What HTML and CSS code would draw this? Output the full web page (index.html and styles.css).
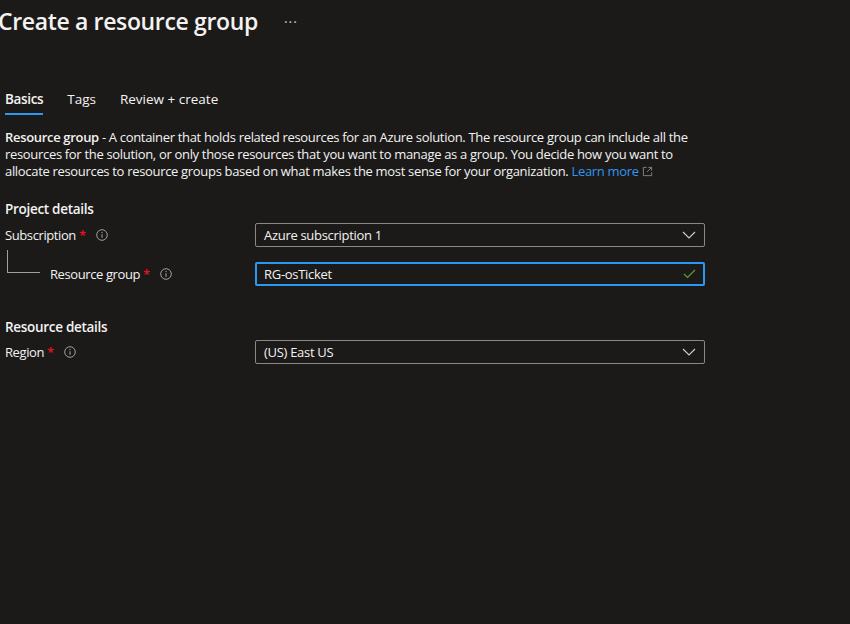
FILE: index.html
```html
<!DOCTYPE html>
<html lang="en">
<head>
<meta charset="utf-8">
<title>Create a resource group</title>
<link rel="stylesheet" href="styles.css">
</head>
<body>
<div class="page">
  <header class="header">
    <h1 class="title">Create a resource group</h1>
    <span class="more">···</span>
  </header>

  <nav class="tabs">
    <span class="tab active">Basics</span>
    <span class="tab">Tags</span>
    <span class="tab">Review + create</span>
  </nav>

  <p class="desc"><b>Resource group</b> - A container that holds related resources for an Azure solution. The resource group can include all the resources for the solution, or only those resources that you want to manage as a group. You decide how you want to allocate resources to resource groups based on what makes the most sense for your organization. <a class="link" href="#">Learn more <svg class="ext" viewBox="0 0 12 12" width="11" height="11"><path d="M5 1.5H1.5v9h9V7" fill="none" stroke="currentColor" stroke-width="1"/><path d="M7 1.5h3.5V5M10.5 1.5L5.5 6.5" fill="none" stroke="currentColor" stroke-width="1"/></svg></a></p>

  <h2 class="section">Project details</h2>
  <div class="form">
    <div class="row">
      <div class="label">Subscription <span class="req">*</span>
        <svg class="info" viewBox="0 0 12 12" width="12" height="12"><circle cx="6" cy="6" r="5.3" fill="none" stroke="currentColor" stroke-width="1"/><path d="M6 5.2v3.6" stroke="currentColor" stroke-width="1.1"/><circle cx="6" cy="3.6" r="0.7" fill="currentColor"/></svg>
      </div>
      <div class="field">
        <span>Azure subscription 1</span>
        <svg class="chev" viewBox="0 0 14 8" width="14" height="8"><path d="M1 1l6 6 6-6" fill="none" stroke="currentColor" stroke-width="1.1"/></svg>
      </div>
    </div>
    <div class="row sub">
      <div class="label"><span class="tree"></span>Resource group <span class="req">*</span>
        <svg class="info" viewBox="0 0 12 12" width="12" height="12"><circle cx="6" cy="6" r="5.3" fill="none" stroke="currentColor" stroke-width="1"/><path d="M6 5.2v3.6" stroke="currentColor" stroke-width="1.1"/><circle cx="6" cy="3.6" r="0.7" fill="currentColor"/></svg>
      </div>
      <div class="field focused">
        <span>RG-osTicket</span>
        <svg class="check" viewBox="0 0 13 10" width="13" height="10"><path d="M1 5l3.5 3.5L12 1" fill="none" stroke="currentColor" stroke-width="1.2"/></svg>
      </div>
    </div>
  </div>

  <h2 class="section second">Resource details</h2>
  <div class="form">
    <div class="row">
      <div class="label">Region <span class="req">*</span>
        <svg class="info" viewBox="0 0 12 12" width="12" height="12"><circle cx="6" cy="6" r="5.3" fill="none" stroke="currentColor" stroke-width="1"/><path d="M6 5.2v3.6" stroke="currentColor" stroke-width="1.1"/><circle cx="6" cy="3.6" r="0.7" fill="currentColor"/></svg>
      </div>
      <div class="field">
        <span>(US) East US</span>
        <svg class="chev" viewBox="0 0 14 8" width="14" height="8"><path d="M1 1l6 6 6-6" fill="none" stroke="currentColor" stroke-width="1.1"/></svg>
      </div>
    </div>
  </div>
</div>
</body>
</html>
```

FILE: styles.css
```css
html, body {
  margin: 0;
  padding: 0;
  background: #1b1a19;
  height: 100%;
}
body {
  color: #f3f2f1;
  font-family: "Segoe UI", "Open Sans", "Noto Sans", sans-serif;
  font-size: 13px;
  letter-spacing: -0.3px;
}
.page {
  padding: 0 5px;
}
.header {
  display: flex;
  align-items: center;
  height: 42px;
}
.title {
  margin: 0 0 0 -7px;
  font-size: 23px;
  font-weight: 600;
  line-height: 42px;
  letter-spacing: -0.35px;
}
.more {
  margin-left: 26px;
  font-size: 14px;
  color: #c8c6c4;
  letter-spacing: 1px;
}
.tabs {
  display: flex;
  gap: 24px;
  margin-top: 44px;
  height: 30px;
}
.tab {
  font-size: 13.5px;
  letter-spacing: 0;
  line-height: 26px;
  height: 28px;
}
.tab.active {
  font-weight: 600;
  letter-spacing: -0.35px;
  border-bottom: 2px solid #2899f5;
  height: 27px;
}
.desc {
  margin: 13px 0 0;
  line-height: 17px;
  width: 700px;
  letter-spacing: -0.32px;
}
.desc b {
  font-weight: 600;
}
.link {
  color: #2f96f0;
  text-decoration: none;
}
.ext {
  vertical-align: -1px;
  color: #8a8886;
}
.section {
  margin: 20px 0 0;
  font-size: 13.5px;
  font-weight: 600;
  line-height: 18px;
}
.section.second {
  margin-top: 32px;
}
.form {
  display: flex;
  flex-direction: column;
  gap: 15px;
  margin-top: 5px;
}
.section.second + .form {
  margin-top: 4px;
}
.row {
  display: grid;
  grid-template-columns: 250px 450px;
  align-items: center;
}
.label {
  display: flex;
  align-items: center;
  gap: 3px;
  font-size: 13px;
  letter-spacing: -0.4px;
}
.req {
  color: #e81123;
  font-weight: 600;
}
.info {
  color: #a19f9d;
  margin-left: 7px;
}
.tree {
  display: block;
  width: 32px;
  height: 22px;
  margin: -25px 7px 0 2px;
  border-left: 1px solid #a19f9d;
  border-bottom: 1px solid #a19f9d;
}
.field {
  display: flex;
  align-items: center;
  justify-content: space-between;
  height: 24px;
  box-sizing: border-box;
  border: 1px solid #8a8886;
  border-radius: 2px;
  padding: 0 8px 0 8px;
  color: #f3f2f1;
}
.field.focused {
  border: 2px solid #2899f5;
  padding: 0 7px 0 7px;
}
.check {
  color: #5f9b3b;
}
.chev {
  color: #d2d0ce;
}
```
